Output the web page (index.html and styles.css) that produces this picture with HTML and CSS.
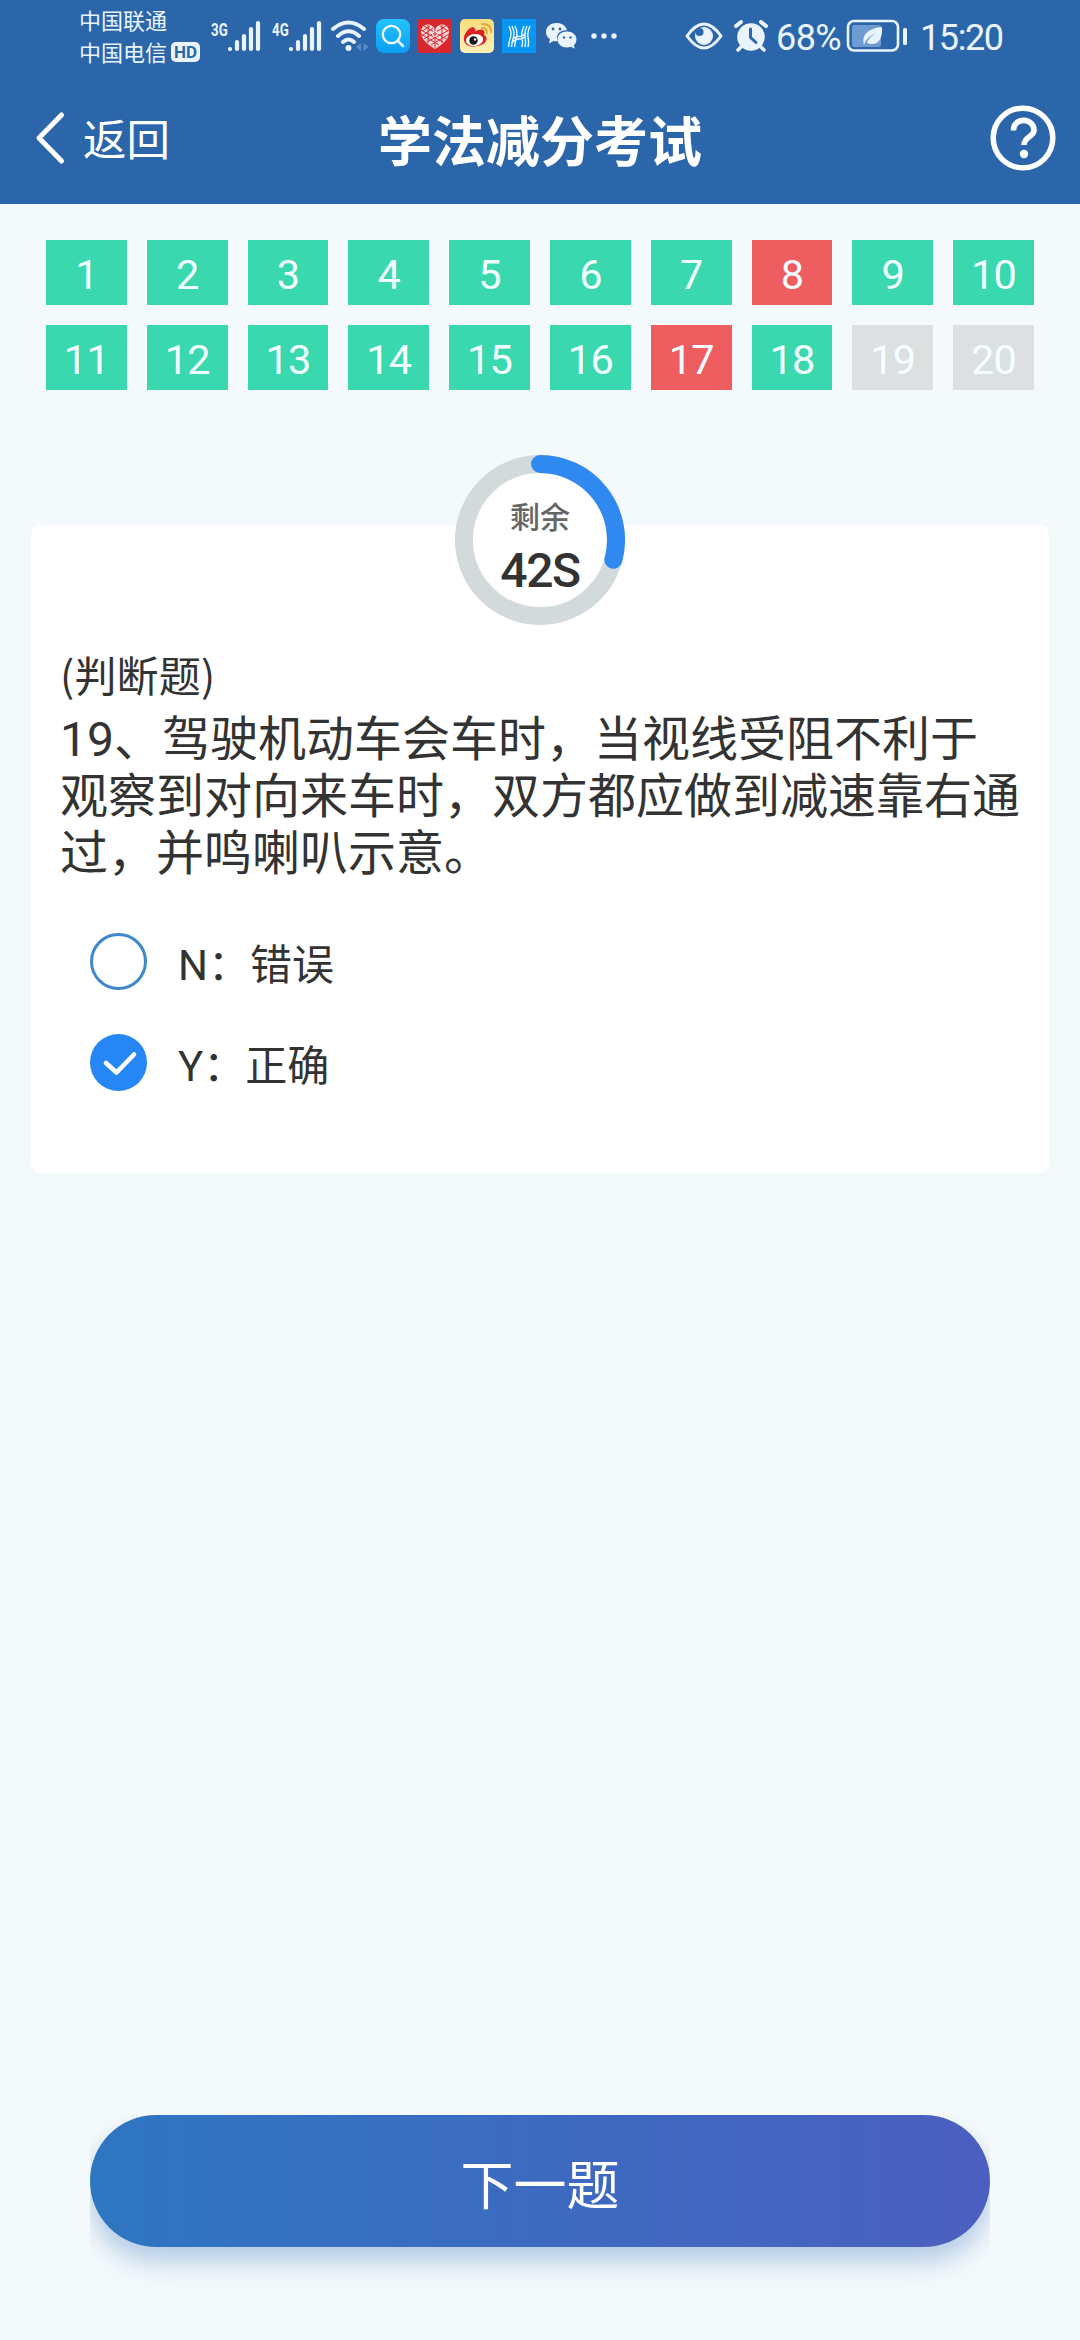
FILE: index.html
```html
<!DOCTYPE html>
<html lang="zh-CN">
<head>
<meta charset="utf-8">
<title>学法减分考试</title>
<link rel="stylesheet" href="styles.css">
</head>
<body>
<div class="screen">
  <header class="top">
    <div class="status">
      <div class="carriers">
        <div class="carrier">中国联通</div>
        <div class="carrier">中国电信<span class="hd">HD</span></div>
      </div>
      <div class="signal">
        <span class="net">3G</span>
        <svg width="34" height="34" viewBox="0 0 34 34" stroke="#eaf4ff" stroke-width="4.2" stroke-linecap="round"><path d="M3 30v.1M10 23v7M17 17v13M24 10v20M31 4v26"/></svg>
      </div>
      <div class="signal">
        <span class="net">4G</span>
        <svg width="34" height="34" viewBox="0 0 34 34" stroke="#eaf4ff" stroke-width="4.2" stroke-linecap="round"><path d="M3 30v.1M10 23v7M17 17v13M24 10v20M31 4v26"/></svg>
      </div>
      <svg class="wifi" width="40" height="34" viewBox="0 0 40 34" fill="none" stroke="#eaf4ff" stroke-width="4" stroke-linecap="round"><path d="M3 10Q18.500-3 34 10M8 17Q18.500 7.500 29 17M13 23Q18.500 18 24 23"/><circle cx="18.500" cy="29" r="3" fill="#eaf4ff" stroke="none"/><path d="M31 24v8l-5-4zM33.500 24v8l5-4z" fill="#5c8bc6" stroke="none"/></svg>
      <div class="apps">
        <svg width="34" height="34" viewBox="0 0 34 34"><defs><linearGradient id="search" x2="0" y2="1"><stop stop-color="#22c4fb"/><stop offset="1" stop-color="#0c9df5"/></linearGradient></defs><rect width="34" height="34" rx="8" fill="url(#search)"/><circle cx="15.500" cy="15.500" r="8.700" fill="none" stroke="#effaff" stroke-width="2.300"/><path d="M22 22l5 5" stroke="#effaff" stroke-width="2.600" stroke-linecap="round"/></svg>
        <svg width="34" height="34" viewBox="0 0 34 34"><rect width="34" height="34" rx="2" fill="#d8282d"/><path d="M17 10Q21 4 27 6Q33 9 30 18Q27 24 17 30Q7 24 4 18Q1 9 7 6Q13 4 17 10Z" fill="#ffd9d9"/><path d="M4 12l8-5M4 17l11-8M6 20l22-13M9 23L31 11M13 26l18-11M30 12l-8-5M28 20L6 7M25 23L3 11M21 26L3 15M10 6v18M17 9v20M24 6v18" stroke="#d8282d" stroke-width="1"/><circle cx="17" cy="15" r="3" fill="#ffd9d9"/><path d="M15 15h4M17 13v4" stroke="#d8282d"/></svg>
        <svg width="34" height="34" viewBox="0 0 34 34"><defs><linearGradient id="wb" x2="0" y2="1"><stop stop-color="#f8dc7c"/><stop offset="1" stop-color="#fff0b6"/></linearGradient></defs><rect width="34" height="34" rx="5" fill="url(#wb)"/><path d="M4 21C3 15 10 7 14 8.500q2 1 1 4Q22 9 24 12q1 1 0 4Q28 18 26 22C23 28 5 31 4 21Z" fill="#dc1f20"/><ellipse cx="14.500" cy="21" rx="8.700" ry="6" fill="#fff" transform="rotate(-8 14.500 21)"/><circle cx="13.500" cy="21.500" r="4.200" fill="#151515"/><circle cx="15" cy="20.500" r="1.200" fill="#fff"/><path d="M22 9q5-.5 5 5M22 5q9-.5 9 8" fill="none" stroke="#e9a634" stroke-width="2" stroke-linecap="round"/></svg>
        <svg width="34" height="34" viewBox="0 0 34 34"><rect width="34" height="34" fill="#0896f5"/><path d="M7 7q3 6 1.500 11T6.500 28M10 7q3 6 1.500 11T9.500 28M13 7q3 6 1.500 11T12.500 28M22 7q-3 6-2 11t0 10M25 7q-3 6-2 11t0 10M28 7q-3 6-2 11t0 10M11 20q3-3 6-2.500T24 14M10.500 23q4-3.500 7-3T24 17" fill="none" stroke="#eaf8ff" stroke-width="1.400"/></svg>
      </div>
      <svg class="wechat" width="32" height="28" viewBox="0 0 32 28"><path d="M11.500 1C5 1 1 5.300 1 10q0 4.500 4 7.200L4 21.500l4.500-2.600q2 .6 4 .3C10 12 16 7.500 22 8.300 21 3.600 16.500 1 11.500 1Z" fill="#eaf4ff"/><path d="M22 9.500c-5.500 0-9.500 3.500-9.500 8s4 8 9.500 8q2 0 4-.7l3.700 2-.8-3.500q2.600-2.300 2.600-5.800c0-4.500-4-8-9.500-8Z" fill="#eaf4ff"/><g fill="#2d66aa"><circle cx="8" cy="7" r="1.400"/><circle cx="15" cy="7" r="1.400"/><circle cx="19" cy="15.500" r="1.200"/><circle cx="25.500" cy="15.500" r="1.200"/></g></svg>
      <svg class="more" width="26" height="6" viewBox="0 0 26 6" fill="#eaf4ff"><circle cx="3" cy="3" r="2.700"/><circle cx="13" cy="3" r="2.700"/><circle cx="23" cy="3" r="2.700"/></svg>
      <svg class="eye" width="38" height="28" viewBox="0 0 38 28"><path d="M2 14Q19-10 36 14Q19 38 2 14Z" fill="none" stroke="#eaf4ff" stroke-width="3" stroke-linejoin="round"/><circle cx="19" cy="14" r="9" fill="#eaf4ff"/><circle cx="14.500" cy="10" r="4" fill="#2d66aa"/></svg>
      <svg class="alarm" width="34" height="32" viewBox="0 0 34 32"><circle cx="17" cy="17" r="13.800" fill="#eaf4ff"/><path d="M2 6l5-4M32 6l-5-4" stroke="#eaf4ff" stroke-width="4" stroke-linecap="round"/><path d="M7 27l-3 3M27 27l3 3" stroke="#eaf4ff" stroke-width="3.500" stroke-linecap="round"/><path d="M16.500 9v8.500l5.500 5" fill="none" stroke="#2d66aa" stroke-width="3" stroke-linecap="round" stroke-linejoin="round"/></svg>
      <span class="percent">68%</span>
      <svg class="battery" width="62" height="34" viewBox="0 0 62 34"><rect x="6" y="6" width="29" height="22" rx="2" fill="#6d9bd2"/><rect x="2" y="2" width="50" height="29.500" rx="6" fill="none" stroke="#eaf4ff" stroke-width="2.600"/><rect x="57" y="9" width="4" height="17" rx="1.500" fill="#eaf4ff"/><path d="M18 26C15 14 25 9 36 8C37 21 31 28 21 24Q22 19 30 14Q20 18 18 26Z" fill="#eaf4ff"/></svg>
      <span class="clock">15:20</span>
    </div>
    <nav class="nav">
      <div class="back">
        <svg width="32" height="54" viewBox="0 0 32 54" fill="none" stroke="#fff" stroke-width="5" stroke-linecap="round" stroke-linejoin="round"><path d="M27.500 4L5 27l22.500 23"/></svg>
        <span>返回</span>
      </div>
      <h1 class="title">学法减分考试</h1>
      <svg class="help" width="66" height="66" viewBox="0 0 66 66" fill="none" stroke="#fff"><circle cx="33" cy="33" r="29.800" stroke-width="5.500"/><path d="M23.500 25.500C23 11.500 44.500 12.500 44 25.500C43.500 32 34 32 34 40" stroke-width="5.600"/><circle cx="34" cy="49" r="4.200" fill="#fff" stroke="none"/></svg>
    </nav>
  </header>

  <section class="grid">
    <div class="tile">1</div><div class="tile">2</div><div class="tile">3</div><div class="tile">4</div><div class="tile">5</div>
    <div class="tile">6</div><div class="tile">7</div><div class="tile wrong">8</div><div class="tile">9</div><div class="tile">10</div>
    <div class="tile">11</div><div class="tile">12</div><div class="tile">13</div><div class="tile">14</div><div class="tile">15</div>
    <div class="tile">16</div><div class="tile wrong">17</div><div class="tile">18</div><div class="tile pending">19</div><div class="tile pending">20</div>
  </section>

  <main class="card">
    <div class="timer">
      <svg class="ring" width="170" height="170" viewBox="0 0 170 170" fill="none" stroke-width="18"><circle cx="85" cy="85" r="76" fill="#fff" stroke="#d2dadb"/><path d="M85 9A76 76 0 0 1 158.400 104.700" stroke="#2f89f0" stroke-linecap="round"/></svg>
      <span class="left">剩余</span>
      <span class="seconds">42S</span>
    </div>
    <p class="kind">(判断题)</p>
    <p class="question">19、驾驶机动车会车时，当视线受阻不利于观察到对向来车时，双方都应做到减速靠右通过，并鸣喇叭示意。</p>
    <div class="options">
      <div class="option"><span class="radio"></span><span><span class="latin">N</span>：错误</span></div>
      <div class="option"><span class="radio checked"><svg width="57" height="57" viewBox="0 0 57 57" fill="none" stroke="#fff" stroke-width="4.600" stroke-linecap="round" stroke-linejoin="round"><path d="M16 29l10.500 9.500L44 20.500"/></svg></span><span><span class="latin">Y</span>：正确</span></div>
    </div>
  </main>

  <button class="next">下一题</button>
</div>
</body>
</html>
```

FILE: styles.css
```css
* { box-sizing: border-box; }

body {
  margin: 0;
  background: #f4f9fb;
  color: #333;
  font-family: "Noto Sans CJK SC", sans-serif;
}

svg { display: block; flex: none; }

.latin {
  font-family: "Roboto", sans-serif;
  line-height: 1;
}

.screen {
  width: 1080px;
  height: 2340px;
  display: flex;
  flex-direction: column;
}

.top {
  height: 204px;
  flex: none;
  background: #2c66aa;
  color: #fff;
}

/* status bar */
.status {
  height: 72px;
  display: flex;
  align-items: center;
  padding-left: 79px;
  color: #eaf4ff;
}

.carriers { width: 132px; padding-bottom: 3px; }

.carrier {
  display: flex;
  align-items: center;
  height: 32px;
  font-size: 22px;
  line-height: 32px;
  white-space: nowrap;
}

.hd {
  margin: 2px 0 0 4px;
  width: 29px;
  height: 20px;
  border-radius: 5px;
  background: #eaf4ff;
  color: #2c66aa;
  font: bold 17px/20px "Roboto", sans-serif;
  text-align: center;
}

.signal {
  display: flex;
  align-items: flex-start;
  width: 61px;
}

.net {
  width: 16px;
  font: bold 19px/16px "Roboto", sans-serif;
  transform: scaleX(.7);
  transform-origin: left;
  padding-top: 3px;
}

.wifi { margin-left: -3px; }
.apps { display: flex; gap: 8px; margin-left: 6px; }
.wechat { margin-left: 9px; }
.more { margin-left: 14px; }
.eye { margin-left: 68px; }
.alarm { margin-left: 11px; }

.percent,
.clock {
  padding-top: 4px;
  font-family: "Roboto", sans-serif;
  font-size: 36px;
  line-height: 60px;
  white-space: nowrap;
}

.percent { margin-left: 8px; width: 70px; letter-spacing: -.6px; }
.clock { margin-left: 12px; letter-spacing: -1.4px; }

/* navigation bar */
.nav {
  display: grid;
  grid-template-columns: 1fr auto 1fr;
  align-items: center;
  height: 132px;
  padding: 0 24px 0 34px;
}

.back {
  display: flex;
  align-items: center;
  gap: 17px;
  font-size: 43.5px;
  line-height: 60px;
}

.title {
  margin: 1px 0 0 -10px;
  font-size: 54px;
  line-height: 72px;
  font-weight: 700;
}

.help { justify-self: end; }

/* answer sheet */
.grid {
  display: grid;
  grid-template-columns: repeat(10, 1fr);
  grid-auto-rows: 65px;
  gap: 20px;
  padding: 36px 46px 0;
}

.tile {
  background: #3ad8ae;
  color: #f4ffff;
  font-family: "Roboto", sans-serif;
  font-size: 41.5px;
  line-height: 70px;
  letter-spacing: -.8px;
  text-align: center;
}

.wrong { background: #ee5e61; }
.pending { background: #dce0e1; }

/* question card */
.card {
  display: flex;
  flex-direction: column;
  height: 648px;
  margin: 135px 31px 0;
  padding: 0 29px;
  border-radius: 10px;
  background: #fff;
}

.timer {
  display: grid;
  grid-template-rows: 80px 90px;
  justify-items: center;
  align-self: center;
  width: 170px;
  height: 170px;
  margin-top: -70px;
}

.ring { grid-area: 1 / 1 / 3 / 2; }

.left {
  grid-area: 1 / 1;
  align-self: end;
  font-size: 30px;
  line-height: 40px;
  font-weight: 500;
  color: #666;
}

.seconds {
  grid-area: 2 / 1;
  font-family: "Roboto", sans-serif;
  font-size: 48px;
  line-height: 71px;
  font-weight: 500;
  letter-spacing: -1.4px;
}

.kind {
  margin: 19px 0 0;
  font-size: 42px;
  line-height: 60px;
  letter-spacing: .2px;
}

.question {
  margin: 7px 0 0;
  font-family: "Roboto", "Noto Sans CJK SC", sans-serif;
  font-size: 48px;
  line-height: 57px;
}

.options {
  display: flex;
  flex-direction: column;
  gap: 44px;
  margin: 51px 0 0 30px;
}

.option {
  display: flex;
  align-items: center;
  gap: 31px;
  height: 57px;
  font-size: 42px;
  line-height: 57px;
}

.radio {
  width: 57px;
  height: 57px;
  border: 3px solid #3e87cd;
  border-radius: 50%;
}

.checked {
  border: 0;
  background: #2686f5;
}

/* the shadow is cut off at the sides of the button */
.next {
  flex: none;
  width: 900px;
  height: 132px;
  margin: auto auto 93px;
  padding: 1px 0 0;
  border: 0;
  border-radius: 66px;
  background: linear-gradient(90deg, #2e76c1, #4b5fbf);
  box-shadow: 0 15px 25px rgba(46, 110, 185, .32);
  clip-path: inset(0 0 -60px 0);
  color: #fff;
  font: 400 53px/70px "Noto Sans CJK SC", sans-serif;
}
```
